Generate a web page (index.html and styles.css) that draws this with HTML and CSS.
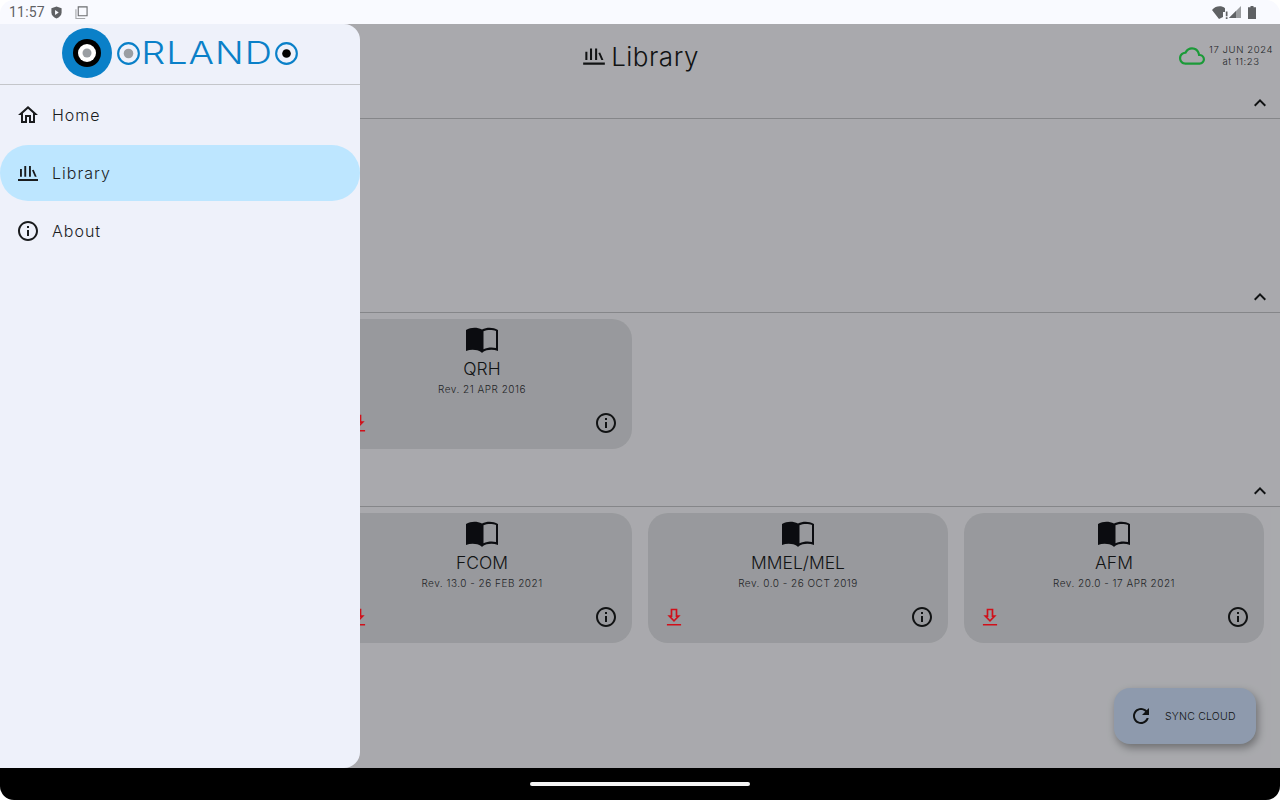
FILE: index.html
```html
<!DOCTYPE html>
<html lang="en">
  <head>
    <meta charset="UTF-8" />
    <meta name="viewport" content="width=device-width, initial-scale=1.0" />
    <title>Orlando Library</title>
    <link rel="stylesheet" href="styles.css">
  </head>
  <body>
    <svg class="icon-defs" aria-hidden="true">
      <symbol id="i-home" viewBox="0 0 24 24"><path d="M12 5.69l5 4.5V18h-2v-6H9v6H7v-7.81l5-4.5M12 3L2 12h3v8h6v-6h2v6h6v-8h3L12 3z"/></symbol>
      <symbol id="i-info" viewBox="0 0 24 24"><path d="M11 7h2v2h-2zm0 4h2v6h-2zm1-9C6.48 2 2 6.48 2 12s4.48 10 10 10 10-4.48 10-10S17.52 2 12 2zm0 18c-4.41 0-8-3.59-8-8s3.59-8 8-8 8 3.59 8 8-3.59 8-8 8z"/></symbol>
      <symbol id="i-library" viewBox="0 0 24 24"><path d="M2 18h20v2H2zM4 8h1.900v7.700H4zM8.300 5h1.900v10.700H8.300zM13 5h1.900v10.700H13zM16 9.300l1.700-.6 3 7h-1.900z"/></symbol>
      <symbol id="i-book" viewBox="0 0 32 26"><path fill-rule="evenodd" d="M0 3C5 0 11 0 16 2.500 21 0 27 0 32 3V24C27 22 20.500 22.500 17 25L16 26 15 25C11.500 22.500 5 22 0 24zM17.500 4.300V22.300C21 20.500 26 20 30 21V4C26.500 2.500 21 2.500 17.500 4.300z"/></symbol>
      <symbol id="i-download" viewBox="0 0 24 24"><path d="M8 2h8v8h4l-8 8-8-8h4zm2 2v8H8.800l3.200 3.200 3.200-3.200H14V4zM3.500 20.500h17v1.700h-17z"/></symbol>
      <symbol id="i-chevron" viewBox="0 0 24 24"><path d="M12 8l-6 6 1.410 1.410L12 10.830l4.590 4.580L18 14z"/></symbol>
      <symbol id="i-cloud" viewBox="0 0 24 24"><path d="M19.350 10.040C18.670 6.590 15.640 4 12 4 9.110 4 6.600 5.640 5.350 8.040 2.340 8.360 0 10.910 0 14c0 3.310 2.690 6 6 6h13c2.760 0 5-2.240 5-5 0-2.640-2.050-4.780-4.650-4.960zM19 18H6c-2.210 0-4-1.790-4-4 0-2.050 1.530-3.760 3.560-3.970l1.070-.11.5-.95C8.080 7.140 9.940 6 12 6c2.620 0 4.880 1.860 5.390 4.430l.3 1.500 1.530.11c1.560.1 2.780 1.410 2.780 2.960 0 1.650-1.350 3-3 3z"/></symbol>
      <symbol id="i-refresh" viewBox="0 0 24 24"><path d="M17.650 6.350C16.200 4.900 14.210 4 12 4c-4.420 0-7.990 3.580-7.990 8s3.570 8 7.990 8c3.730 0 6.840-2.550 7.730-6h-2.080c-.82 2.330-3.040 4-5.650 4-3.310 0-6-2.690-6-6s2.690-6 6-6c1.660 0 3.140.69 4.220 1.780L13 11h7V4l-2.350 2.350z"/></symbol>
    </svg>

    <div class="screen">
      <div class="status-bar">
        <div class="status-left">
          <span class="status-time">11:57</span>
          <svg class="status-shield" viewBox="0 0 14 16"><path d="M7 .5l6.500 2.200V8c0 3.500-2.700 6.200-6.500 7.500C3.200 14.200.5 11.500.5 8V2.700z" fill="#5f6164"/><path d="M5.200 4.800l4.600 3.200-4.600 3.200z" fill="#f9faff"/></svg>
          <svg class="status-square" viewBox="0 0 14 14"><path d="M3.500 1h9.500v9.500H3.500z" fill="none" stroke="#6b6d70" stroke-width="1.200"/><path d="M1 3.500v10h10" fill="none" stroke="#a5a7aa" stroke-width="1.200"/></svg>
        </div>
        <div class="status-right">
          <svg class="status-wifi" viewBox="0 0 16 13"><path d="M0 4C4 -.5 9.500 -.5 13 2.200V6h-2v5L7 13z" fill="#5f6164"/><path d="M13.800 5.500h1.700v4.800h-1.700zM13.800 11.200h1.700V13h-1.700z" fill="#5f6164"/></svg>
          <svg class="status-signal" viewBox="0 0 12 12"><path d="M12 0v12H0z" fill="#9a9c9f"/><path d="M7 5v7H0z" fill="#5f6164"/></svg>
          <svg class="status-battery" viewBox="0 0 8 13"><path d="M2.500 0h3v1.200H8V13H0V1.200h2.500z" fill="#5f6164"/></svg>
        </div>
      </div>

      <div class="app">
        <header class="app-header">
          <div class="page-title">
            <svg class="title-icon"><use href="#i-library"/></svg>
            <h1>Library</h1>
          </div>
          <div class="sync-state">
            <svg class="cloud-icon"><use href="#i-cloud"/></svg>
            <div class="sync-date">17 JUN 2024<br>at 11:23</div>
          </div>
        </header>

        <section class="doc-section">
          <div class="section-head"><svg class="chevron"><use href="#i-chevron"/></svg></div>
          <div class="doc-grid"></div>
        </section>

        <section class="doc-section">
          <div class="section-head"><svg class="chevron"><use href="#i-chevron"/></svg></div>
          <div class="doc-grid">
            <article class="doc-card second-col">
              <svg class="book-icon"><use href="#i-book"/></svg>
              <div class="doc-name">QRH</div>
              <div class="doc-rev">Rev. 21 APR 2016</div>
              <div class="doc-actions">
                <svg class="download-icon"><use href="#i-download"/></svg>
                <svg class="info-icon"><use href="#i-info"/></svg>
              </div>
            </article>
          </div>
        </section>

        <section class="doc-section">
          <div class="section-head"><svg class="chevron"><use href="#i-chevron"/></svg></div>
          <div class="doc-grid">
            <article class="doc-card second-col">
              <svg class="book-icon"><use href="#i-book"/></svg>
              <div class="doc-name">FCOM</div>
              <div class="doc-rev">Rev. 13.0 - 26 FEB 2021</div>
              <div class="doc-actions">
                <svg class="download-icon"><use href="#i-download"/></svg>
                <svg class="info-icon"><use href="#i-info"/></svg>
              </div>
            </article>
            <article class="doc-card">
              <svg class="book-icon"><use href="#i-book"/></svg>
              <div class="doc-name">MMEL/MEL</div>
              <div class="doc-rev">Rev. 0.0 - 26 OCT 2019</div>
              <div class="doc-actions">
                <svg class="download-icon"><use href="#i-download"/></svg>
                <svg class="info-icon"><use href="#i-info"/></svg>
              </div>
            </article>
            <article class="doc-card">
              <svg class="book-icon"><use href="#i-book"/></svg>
              <div class="doc-name">AFM</div>
              <div class="doc-rev">Rev. 20.0 - 17 APR 2021</div>
              <div class="doc-actions">
                <svg class="download-icon"><use href="#i-download"/></svg>
                <svg class="info-icon"><use href="#i-info"/></svg>
              </div>
            </article>
          </div>
        </section>

        <button class="sync-button">
          <svg class="refresh-icon"><use href="#i-refresh"/></svg>
          <span>SYNC CLOUD</span>
        </button>

        <div class="scrim"></div>

        <!-- Navigation drawer, open over the library -->
        <nav class="drawer">
          <div class="drawer-header">
            <div class="logo">
              <svg class="logo-mark" viewBox="0 0 50 50">
                <circle cx="25" cy="25" r="25" fill="#0a80c8"/>
                <circle cx="25" cy="25" r="14" fill="#000"/>
                <circle cx="25" cy="25" r="9" fill="#fff"/>
                <circle cx="25" cy="25" r="4.500" fill="#9a9ea3"/>
              </svg>
              <svg class="logo-o" viewBox="0 0 24 24">
                <circle cx="12" cy="12" r="10.800" fill="none" stroke="#0a80c8" stroke-width="2.200"/>
                <circle cx="12" cy="12" r="5" fill="#9a9ea3"/>
              </svg>
              <span class="logo-text">RLAND</span>
              <svg class="logo-o" viewBox="0 0 24 24">
                <circle cx="12" cy="12" r="10.800" fill="none" stroke="#0a80c8" stroke-width="2.200"/>
                <circle cx="12" cy="12" r="4.500" fill="#000"/>
              </svg>
            </div>
          </div>
          <div class="drawer-items">
            <a class="drawer-item"><svg class="nav-icon"><use href="#i-home"/></svg>Home</a>
            <a class="drawer-item active"><svg class="nav-icon"><use href="#i-library"/></svg>Library</a>
            <a class="drawer-item"><svg class="nav-icon"><use href="#i-info"/></svg>About</a>
          </div>
        </nav>
      </div>

      <div class="nav-bar"><div class="home-pill"></div></div>
    </div>
  </body>
</html>
```

FILE: styles.css
```css
* {
  box-sizing: border-box;
}

body {
  margin: 0;
  background-color: #fff;
  font-family: Inter, "Open Sans", sans-serif;
  color: #1a1c1e;
}

svg {
  fill: currentColor;
  display: block;
}

.icon-defs {
  width: 0;
  height: 0;
  position: absolute;
}

.screen {
  width: 1280px;
  height: 800px;
  display: flex;
  flex-direction: column;
  overflow: hidden;
  border-radius: 14px;
}

/* Status bar */
.status-bar {
  height: 24px;
  flex-shrink: 0;
  background-color: #f9faff;
  display: flex;
  justify-content: space-between;
  align-items: center;
  padding: 0 24px 0 9px;
}

.status-left,
.status-right {
  display: flex;
  align-items: center;
}

.status-time {
  font-family: Roboto, sans-serif;
  font-size: 14px;
  letter-spacing: 0.2px;
  color: #5f6164;
  margin-right: 6px;
}

.status-shield {
  width: 11px;
  height: 13px;
}

.status-square {
  width: 13px;
  height: 13px;
  margin-left: 13px;
}

.status-wifi {
  width: 16px;
  height: 13px;
  margin-right: 1px;
}

.status-signal {
  width: 12px;
  height: 12px;
  margin-right: 7px;
}

.status-battery {
  width: 8px;
  height: 13px;
}

/* App area */
.app {
  flex: 1;
  position: relative;
  background-color: #f9faff;
}

.app-header {
  height: 64px;
  display: flex;
  justify-content: center;
  align-items: center;
  position: relative;
}

.page-title {
  display: flex;
  align-items: center;
  gap: 4px;
}

.page-title h1 {
  margin: 0;
  font-size: 26px;
  font-weight: 300;
  letter-spacing: 0.5px;
}

.title-icon {
  width: 26px;
  height: 26px;
}

.sync-state {
  position: absolute;
  right: 7px;
  top: 19px;
  display: flex;
  align-items: center;
  gap: 4px;
}

/* These two keep their full colour through the scrim */
.cloud-icon {
  width: 26px;
  height: 26px;
  color: #1b9a38;
  position: relative;
  z-index: 2;
}

.sync-date {
  font-size: 9.500px;
  font-weight: 300;
  line-height: 12px;
  letter-spacing: 0.6px;
  text-align: center;
  color: #33363a;
}

.doc-section {
  height: 194px;
}

.section-head {
  height: 31px;
  border-bottom: 1px solid #c4c6ca;
  display: flex;
  justify-content: flex-end;
  align-items: center;
  padding-right: 8px;
}

.chevron {
  width: 24px;
  height: 24px;
}

.doc-grid {
  display: grid;
  grid-template-columns: repeat(4, 300px);
  gap: 16px;
  padding: 6px 16px 0;
}

.doc-card {
  height: 130px;
  background-color: #e1e2e7;
  border-radius: 20px;
  padding: 8px 16px 14px;
  display: flex;
  flex-direction: column;
  align-items: center;
}

.second-col {
  grid-column: 2;
}

.book-icon {
  width: 32px;
  height: 26px;
  color: #111318;
}

.doc-name {
  margin-top: 4px;
  font-size: 17.500px;
  font-weight: 300;
  line-height: 24px;
}

.doc-rev {
  font-size: 10px;
  font-weight: 300;
  line-height: 16px;
  letter-spacing: 0.5px;
  color: #33363a;
}

.doc-actions {
  margin-top: auto;
  align-self: stretch;
  display: flex;
  justify-content: space-between;
  align-items: center;
}

.download-icon {
  width: 20px;
  height: 20px;
  color: #d0101a;
  position: relative;
  z-index: 2;
}

.info-icon {
  width: 24px;
  height: 24px;
  margin-right: -2px;
}

.sync-button {
  position: absolute;
  left: 1114px;
  top: 664px;
  width: 142px;
  height: 56px;
  border: none;
  border-radius: 16px;
  background-color: #d1e4ff;
  box-shadow: 2px 4px 8px rgba(0, 0, 0, 0.35);
  display: flex;
  align-items: center;
  padding: 0 0 0 15px;
  gap: 12px;
  font-family: inherit;
  font-size: 10.500px;
  font-weight: 300;
  letter-spacing: 0.2px;
  color: #1a1c1e;
}

.refresh-icon {
  width: 24px;
  height: 24px;
}

.scrim {
  position: absolute;
  inset: 0;
  background-color: rgba(0, 0, 0, 0.32);
}

/* Drawer */
.drawer {
  position: absolute;
  left: 0;
  top: 0;
  bottom: 0;
  z-index: 3;
  width: 360px;
  background-color: #eef1fa;
  border-radius: 0 16px 16px 0;
}

.drawer-header {
  height: 61px;
  border-bottom: 1px solid #c4c6ca;
  display: flex;
  justify-content: center;
  align-items: flex-start;
  padding-top: 4px;
}

.logo {
  display: flex;
  align-items: center;
  color: #0a80c8;
}

.logo-mark {
  width: 50px;
  height: 50px;
  margin-right: 5px;
}

.logo-o {
  width: 23px;
  height: 23px;
}

.logo-text {
  width: 135px;
  padding-left: 1px;
  font-size: 31px;
  font-weight: 300;
  line-height: 30px;
  letter-spacing: 0.8px;
  transform: scaleX(1.22);
  transform-origin: left center;
}

.drawer-items {
  padding-top: 2px;
  display: flex;
  flex-direction: column;
  gap: 2px;
}

.drawer-item {
  height: 56px;
  border-radius: 28px;
  display: flex;
  align-items: center;
  padding-left: 16px;
  gap: 12px;
  font-size: 16px;
  font-weight: 300;
  letter-spacing: 1px;
  color: #1a1c1e;
}

.drawer-item.active {
  background-color: #bde6ff;
}

.nav-icon {
  width: 24px;
  height: 24px;
}

/* System navigation */
.nav-bar {
  height: 32px;
  flex-shrink: 0;
  background-color: #000;
  display: flex;
  justify-content: center;
  padding-top: 14px;
}

.home-pill {
  width: 220px;
  height: 4px;
  border-radius: 2px;
  background-color: #f4f4f4;
}
```
